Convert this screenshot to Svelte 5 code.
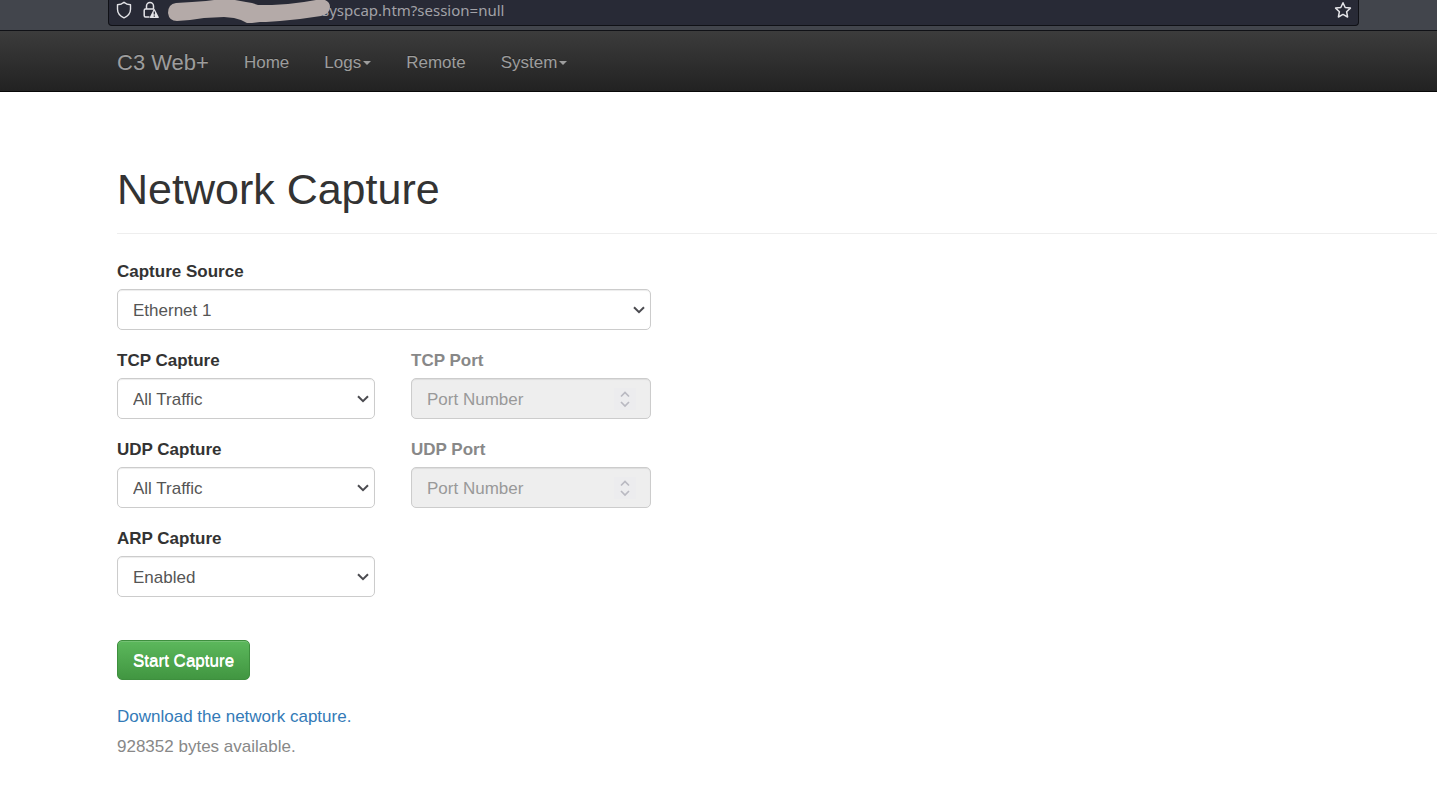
<script>
  let source = $state('Ethernet 1');
  let tcp = $state('All Traffic');
  let udp = $state('All Traffic');
  let arp = $state('Enabled');
</script>

{#snippet chevron()}
  <svg class="chevron" width="12" height="8" viewBox="0 0 12 8" aria-hidden="true">
    <path d="M1 1.200 6 6.200l5-5" fill="none" stroke="#4b4b50" stroke-width="2" />
  </svg>
{/snippet}

{#snippet spinner()}
  <svg class="spinner" width="22" height="22" viewBox="0 0 22 22" aria-hidden="true">
    <rect width="22" height="22" fill="#ececee" />
    <path d="M7 8.500l4-4 4 4M7 14l4 4 4-4" fill="none" stroke="#b9b9c1" stroke-width="1.700" />
  </svg>
{/snippet}

<div class="browser">
  <div class="address">
    <svg width="16" height="18" viewBox="0 0 16 18" aria-hidden="true">
      <path d="M8 1.200C6.200 2.800 4 3.600 1.500 3.800v4.400c0 3.800 2.500 6.700 6.500 8.600 4-1.900 6.500-4.800 6.500-8.600V3.800C12 3.600 9.800 2.800 8 1.200Z" fill="none" stroke="#e4e4e8" stroke-width="1.400" stroke-linejoin="round" />
    </svg>
    <svg class="lock" width="16" height="18" viewBox="0 0 16 18" aria-hidden="true">
      <path d="M3.500 8V5a3.500 3.500 0 0 1 7 0v3M6.500 16H2.500Q1.200 16 1.200 14.500v-5Q1.200 8 2.500 8h8.700" fill="none" stroke="#e4e4e8" stroke-width="1.500" />
      <path d="M10.700 8.200Q11.200 7.600 11.700 8.200L15.900 16.200Q16 17 15.200 17H7.300Q6.500 17 6.800 16.200Z" fill="#e4e4e8" />
      <path d="M11.300 10.500v3M11.300 14.500v1.300" stroke="#282a36" stroke-width="1.300" />
    </svg>
    <span class="url">syspcap.htm?session=null</span>
    <svg class="scribble" width="164" height="24" viewBox="0 0 164 24" aria-hidden="true">
      <path d="M0 13Q0 4 8 3L24 2 38 1 46 0H67L78 2 84 3 90 5H104L120 4 136 2 148 0H157Q162 2 162 7 162 14 153 16L132 19 112 21 98 22H92L84 23H79L73 20 66 18 56 17 36 18 22 20 9 21Q1 21 0 13Z" fill="#b4aaa8" />
    </svg>
    <svg class="star" width="18" height="18" viewBox="0 0 18 18" aria-hidden="true">
      <path d="m9 1.700 2.200 4.800 5.200.6-3.800 3.600 1 5.300L9 13.400 4.400 16l1-5.300L1.600 7.100l5.200-.6Z" fill="none" stroke="#e4e4e8" stroke-width="1.500" stroke-linejoin="round" />
    </svg>
  </div>
</div>

<nav>
  <a class="brand" href="#top">C3 Web+</a>
  <a href="#home">Home</a>
  <a href="#logs">Logs<span class="caret"></span></a>
  <a href="#remote">Remote</a>
  <a href="#system">System<span class="caret"></span></a>
</nav>

<main>
  <h1>Network Capture</h1>
  <form onsubmit={(e) => e.preventDefault()}>
    <div class="fields">
      <div class="field wide">
        <label for="source">Capture Source</label>
        <div class="control">
          <select id="source" bind:value={source}><option>Ethernet 1</option></select>
          {@render chevron()}
        </div>
      </div>
      <div class="field">
        <label for="tcp">TCP Capture</label>
        <div class="control">
          <select id="tcp" bind:value={tcp}><option>All Traffic</option></select>
          {@render chevron()}
        </div>
      </div>
      <div class="field off">
        <label for="tcp-port">TCP Port</label>
        <div class="control">
          <input id="tcp-port" type="number" placeholder="Port Number" disabled />
          {@render spinner()}
        </div>
      </div>
      <div class="field">
        <label for="udp">UDP Capture</label>
        <div class="control">
          <select id="udp" bind:value={udp}><option>All Traffic</option></select>
          {@render chevron()}
        </div>
      </div>
      <div class="field off">
        <label for="udp-port">UDP Port</label>
        <div class="control">
          <input id="udp-port" type="number" placeholder="Port Number" disabled />
          {@render spinner()}
        </div>
      </div>
      <div class="field">
        <label for="arp">ARP Capture</label>
        <div class="control">
          <select id="arp" bind:value={arp}><option>Enabled</option></select>
          {@render chevron()}
        </div>
      </div>
    </div>
    <button type="submit">Start Capture</button>
  </form>
  <a class="download" href="#download">Download the network capture.</a>
  <p>928352 bytes available.</p>
</main>

<style>
  :global(body) {
    margin: 0;
    background: #fff;
    color: #333;
    font: 17px/24px "Liberation Sans", Arial, sans-serif;
  }
  .browser {
    padding: 0 78px 4px 108px;
    background: #42454c;
    border-bottom: 1px solid #101116;
  }
  .address {
    position: relative;
    display: flex;
    align-items: center;
    gap: 11px;
    box-sizing: border-box;
    height: 26px;
    padding: 0 6px 5px 7px;
    background: #282a36;
    border: 1px solid #101116;
    border-top: 0;
    border-radius: 0 0 4px 4px;
  }
  .url {
    margin-left: 152px;
    color: #a2a2a8;
    font: 15px/20px "Noto Sans", sans-serif;
  }
  .scribble {
    position: absolute;
    left: 59px;
    top: 0;
  }
  .star {
    margin-left: auto;
  }
  nav {
    display: flex;
    align-items: center;
    gap: 35px;
    box-sizing: border-box;
    height: 61px;
    padding: 3px 117px 0;
    background: linear-gradient(#3c3c3c, #222);
    border-bottom: 1px solid #080808;
  }
  nav a {
    display: flex;
    align-items: center;
    gap: 2px;
    color: #9d9d9d;
    text-decoration: none;
    text-shadow: 0 -1px 0 rgba(0, 0, 0, 0.25);
  }
  nav .brand {
    font-size: 22px;
  }
  .caret {
    border: 4px solid transparent;
    border-top-color: #9d9d9d;
    border-bottom: 0;
  }
  main {
    padding: 72px 0 24px 117px;
  }
  h1 {
    margin: 0 0 25px;
    padding-bottom: 19px;
    border-bottom: 1px solid #eee;
    font-size: 43px;
    line-height: 50px;
    font-weight: 400;
  }
  .fields {
    display: grid;
    grid-template-columns: 258fr 240fr;
    gap: 18px 36px;
    max-width: 534px;
  }
  .wide {
    grid-column: 1 / -1;
  }
  label {
    display: block;
    margin-bottom: 4px;
    line-height: 26px;
    font-weight: 700;
  }
  .off label {
    color: #888;
  }
  .control {
    position: relative;
  }
  select,
  input {
    display: block;
    box-sizing: border-box;
    width: 100%;
    height: 41px;
    margin: 0;
    padding: 2px 15px 0;
    appearance: none;
    border: 1px solid #ccc;
    border-radius: 5px;
    background: #fff;
    box-shadow: inset 0 1px 1px rgba(0, 0, 0, 0.075);
    color: #555;
    font: inherit;
  }
  input {
    background: #eee;
    appearance: textfield;
  }
  input::placeholder {
    color: #999;
    opacity: 1;
  }
  .chevron,
  .spinner {
    position: absolute;
    pointer-events: none;
  }
  .chevron {
    right: 6px;
    top: 17px;
  }
  .spinner {
    right: 15px;
    top: 10px;
  }
  button {
    display: block;
    height: 40px;
    margin: 43px 0 25px;
    padding: 2px 15px 0;
    border: 1px solid #3e8f3e;
    border-radius: 5px;
    background: linear-gradient(#5cb85c, #419641);
    box-shadow: inset 0 1px 0 rgba(255, 255, 255, 0.15);
    color: #fff;
    font: inherit;
    text-shadow: 0 1px 0 #fff;
  }
  .download {
    color: #337ab7;
    text-decoration: none;
  }
  p {
    margin: 6px 0 0;
    color: #888;
  }
</style>
